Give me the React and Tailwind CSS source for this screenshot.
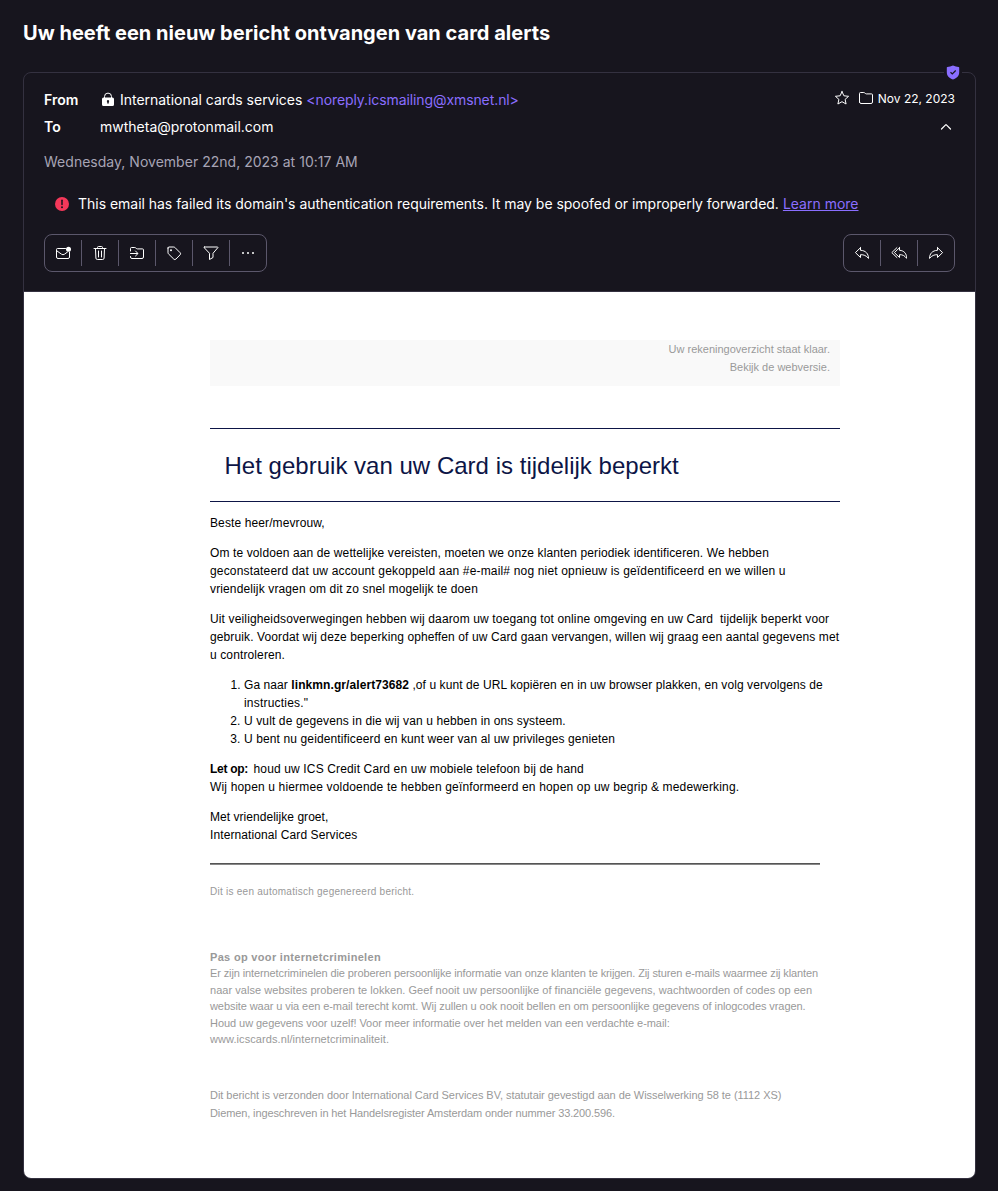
const Svg = ({ children, className = "", size = 16, sw = 1 }) => (
  <svg
    width={size}
    height={size}
    viewBox="0 0 16 16"
    fill="none"
    stroke="currentColor"
    strokeWidth={sw}
    strokeLinejoin="round"
    strokeLinecap="round"
    className={`shrink-0 ${className}`}
  >
    {children}
  </svg>
);

const LockIcon = () => (
  <Svg>
    <path d="M4.500 6.500V4.600a3.500 3.500 0 0 1 7 0v1.900" />
    <path
      fill="currentColor"
      stroke="none"
      fillRule="evenodd"
      d="M3.500 5.500h9A1.500 1.500 0 0 1 14 7v5.500A1.500 1.500 0 0 1 12.500 14h-9A1.500 1.500 0 0 1 2 12.500V7A1.500 1.500 0 0 1 3.500 5.500Zm4.500 2.500a1.100 1.100 0 0 0-.8 1.900v1.600h1.600V9.900A1.100 1.100 0 0 0 8 8Z"
    />
  </Svg>
);

const StarIcon = () => (
  <Svg>
    <path strokeLinejoin="miter" d="m8 1.600 1.900 4.200 4.700.5-3.500 3.100 1 4.600L8 11.700 3.900 14l1-4.600-3.500-3.100 4.700-.5L8 1.600Z" />
  </Svg>
);

const FolderIcon = () => (
  <Svg>
    <path d="M1.500 12V3.500a1 1 0 0 1 1-1h3.300a1 1 0 0 1 .6.2l1.300 1a1 1 0 0 0 .6.200h5.200a1 1 0 0 1 1 1V12a1.500 1.500 0 0 1-1.500 1.500H3A1.500 1.500 0 0 1 1.500 12Z" />
  </Svg>
);

const ChevronUp = () => (
  <Svg sw={1.2}>
    <path d="m3.500 10 4.100-4.100a.6.6 0 0 1 .8 0l4.100 4.100" />
  </Svg>
);

const MailIcon = () => (
  <Svg>
    <path d="M10.500 3.500H2.500a1 1 0 0 0-1 1v7.500A1.500 1.500 0 0 0 3 13.500h10a1.500 1.500 0 0 0 1.500-1.500V7" />
    <path d="m1.800 5.800 4.700 3.400a2.500 2.500 0 0 0 3 0l3-2.200" />
    <circle cx="13.500" cy="4.300" r="2.500" fill="currentColor" stroke="none" />
  </Svg>
);

const TrashIcon = () => (
  <Svg>
    <path d="M2 3.500h12M5.500 3.300V2.500a1 1 0 0 1 1-1h3a1 1 0 0 1 1 1v.8M3.500 3.700l.4 9.400a1.500 1.500 0 0 0 1.500 1.400h5.200a1.500 1.500 0 0 0 1.500-1.400l.4-9.400M6.500 6v6M9.500 6v6" />
  </Svg>
);

const MoveIcon = () => (
  <Svg>
    <path d="M1.500 6V3.500a1 1 0 0 1 1-1h3.300a1 1 0 0 1 .6.200l1.300 1a1 1 0 0 0 .6.200h5.200a1 1 0 0 1 1 1V12a1.500 1.500 0 0 1-1.500 1.500H3A1.500 1.500 0 0 1 1.500 12v-.5M1.500 8.500h7M6.500 6l2.500 2.500L6.500 11" />
  </Svg>
);

const TagIcon = () => (
  <Svg>
    <path d="M2 3a1 1 0 0 1 1-1h4.800a1.500 1.500 0 0 1 1 .4l5.300 5.300a1.500 1.500 0 0 1 0 2.100l-4.200 4.300a1.500 1.500 0 0 1-2.100 0L2.400 8.800a1.500 1.500 0 0 1-.4-1V3Z" />
    <circle cx="5" cy="5.200" r="1" fill="currentColor" stroke="none" />
  </Svg>
);

const FunnelIcon = () => (
  <Svg>
    <path d="M1.500 2h13a.4.4 0 0 1 .3.700L10 8.300v4.200l-3.500 2V8.300L1.200 2.700A.4.4 0 0 1 1.500 2Z" />
  </Svg>
);

const DotsIcon = () => (
  <Svg>
    <g fill="currentColor" stroke="none">
      <circle cx="3" cy="8" r="1" />
      <circle cx="8" cy="8" r="1" />
      <circle cx="13" cy="8" r="1" />
    </g>
  </Svg>
);

const ReplyShape = "M6.500 2.700 1.400 7.600l5.100 4.900V9.700c3.400-.1 5.600.9 8 3.700 0-4.600-2.800-7.900-8-8.100V2.700Z";

const ReplyIcon = () => (
  <Svg>
    <path d={ReplyShape} />
  </Svg>
);

const ReplyAllIcon = () => (
  <Svg>
    <path d="M8.500 2.700 3.400 7.600l5.100 4.900V9.700c3.200-.1 5 .9 7.200 3.700 0-4.600-2.500-7.900-7.200-8.100V2.700Z" />
    <path d="M5.900 2.700.8 7.600l5.100 4.900" />
  </Svg>
);

const ForwardIcon = () => (
  <Svg>
    <path d={ReplyShape} transform="matrix(-1 0 0 1 16 0)" />
  </Svg>
);

const ButtonGroup = ({ icons }) => (
  <div className="flex h-[38px] rounded-lg border border-[#5b576b] py-[5px]">
    {icons.map((Icon, i) => (
      <button
        key={i}
        className={`flex items-center justify-center ${i ? "w-[37px] border-l border-[#5b576b]" : "w-9"}`}
      >
        <Icon />
      </button>
    ))}
  </div>
);

const Lines = ({ items }) =>
  items.map(([text, tracking], i) => (
    <div key={i} className={tracking}>
      {text}
    </div>
  ));

export default function App() {
  return (
    <div className="flex h-[1191px] w-[998px] flex-col bg-[#17151e] pl-[23px] pr-[22px] font-['Inter',sans-serif] text-sm leading-5 whitespace-nowrap text-white">
      <h1 className="mt-[19px] h-7 text-[20px] leading-7 font-bold tracking-[0.012px]">
        Uw heeft een nieuw bericht ontvangen van card alerts
      </h1>

      <article className="relative mt-[25px] flex h-[1107px] flex-col rounded-lg border border-[#343140]">
        <div className="absolute top-[-8px] right-[13px] bg-[#17151e] px-0.5">
          <svg width="14" height="15" viewBox="0 0 14 15">
            <path
              fill="#8a6eff"
              d="M7 .5c2 .9 3.800 1.300 5.600 1.400.4 0 .6.300.6.600v4.700c0 3.600-2.200 5.700-6.200 7.300C3 12.900.8 10.800.8 7.200V2.500c0-.3.200-.6.600-.6C3.200 1.800 5 1.400 7 .5Z"
            />
            <path d="m4.500 7.300 1.800 1.700 3.400-3.500" fill="none" stroke="#17151e" strokeWidth="1.200" />
          </svg>
        </div>

        <header className="flex h-[219px] flex-col border-b border-[#343140] px-5 pt-[17px]">
          <div className="flex h-5 items-center">
            <span className="w-14 font-semibold">From</span>
            <LockIcon />
            <span className="ml-1 tracking-[-0.02px]">International cards services</span>
            <span className="ml-1 tracking-[-0.09px] text-[#8a6eff]">&lt;noreply.icsmailing@xmsnet.nl&gt;</span>
            <span className="ml-auto flex items-center gap-2 pb-1 text-xs leading-5">
              <StarIcon />
              <FolderIcon />
              <span className="-ml-1 pt-0.5">Nov 22, 2023</span>
            </span>
          </div>
          <div className="mt-[7px] flex h-5 items-center">
            <span className="w-14 font-semibold">To</span>
            <span>mwtheta@protonmail.com</span>
            <span className="mr-px ml-auto">
              <ChevronUp />
            </span>
          </div>
          <div className="mt-[15px] tracking-[0.02px] text-[#a7a4b5]">Wednesday, November 22nd, 2023 at 10:17 AM</div>
          <div className="mt-[22px] flex h-5 items-center pl-[11px]">
            <svg width="14" height="14" viewBox="0 0 14 14" className="mr-[9px]">
              <circle cx="7" cy="7" r="7" fill="#f5385a" />
              <path d="M7 3.300v4.200" stroke="#17151e" strokeWidth="1.500" strokeLinecap="round" />
              <circle cx="7" cy="10.200" r="1" fill="#17151e" />
            </svg>
            <span className="tracking-[-0.024px]">
              This email has failed its domain's authentication requirements. It may be spoofed or improperly forwarded.
            </span>
            <a className="ml-1 text-[#8a6eff] underline">Learn more</a>
          </div>
          <div className="mt-5 flex justify-between">
            <ButtonGroup icons={[MailIcon, TrashIcon, MoveIcon, TagIcon, FunnelIcon, DotsIcon]} />
            <ButtonGroup icons={[ReplyIcon, ReplyAllIcon, ForwardIcon]} />
          </div>
        </header>

        <main className="flex-1 rounded-b-[7px] bg-white pt-12 pl-[186px] font-['Liberation_Sans',Arial,sans-serif] text-xs leading-[18px] text-black">
          <div className="w-[630px]">
            <div className="h-[46px] bg-[#f9f9f9] pr-2.5 text-right text-[11px] text-[#999]">
              <Lines items={[["Uw rekeningoverzicht staat klaar."], ["Bekijk de webversie."]]} />
            </div>
            <h2 className="mt-[42px] flex h-[74px] items-center border-y border-[#0d1546] pt-0.5 pl-[14.5px] text-2xl tracking-[0.015px] text-[#0d1546]">
              Het gebruik van uw Card is tijdelijk beperkt
            </h2>
            <div className="mt-3 flex flex-col gap-3">
              <p className="tracking-[0.11px]">Beste heer/mevrouw,</p>
              <div>
                <Lines
                  items={[
                    [
                      "Om te voldoen aan de wettelijke vereisten, moeten we onze klanten periodiek identificeren. We hebben",
                      "tracking-[0.115px]",
                    ],
                    [
                      "geconstateerd dat uw account gekoppeld aan #e-mail# nog niet opnieuw is geïdentificeerd en we willen u",
                      "tracking-[0.17px]",
                    ],
                    ["vriendelijk vragen om dit zo snel mogelijk te doen", "tracking-[0.13px]"],
                  ]}
                />
              </div>
              <div>
                <Lines
                  items={[
                    [
                      "Uit veiligheidsoverwegingen hebben wij daarom uw toegang tot online omgeving en uw Card \u00a0tijdelijk beperkt voor",
                      "tracking-[0.14px]",
                    ],
                    [
                      "gebruik. Voordat wij deze beperking opheffen of uw Card gaan vervangen, willen wij graag een aantal gegevens met",
                      "tracking-[0.11px]",
                    ],
                    ["u controleren.", "tracking-[0.12px]"],
                  ]}
                />
              </div>
              <ol className="list-decimal pl-[34px] tracking-[0.12px]">
                <li className="tracking-[0.08px]">
                  Ga naar <b>linkmn.gr/alert73682</b> ,of u kunt de URL kopiëren en in uw browser plakken, en volg
                  vervolgens de
                  <br />
                  <span className="tracking-[0.2px]">instructies."</span>
                </li>
                <li>U vult de gegevens in die wij van u hebben in ons systeem.</li>
                <li>U bent nu geidentificeerd en kunt weer van al uw privileges genieten</li>
              </ol>
              <div>
                <p className="tracking-[0.14px]">
                  <b className="tracking-[-0.28px]">Let op:</b>
                  <span className="ml-[5.5px]">houd uw ICS Credit Card en uw mobiele telefoon bij de hand</span>
                </p>
                <p className="tracking-[0.16px]">
                  Wij hopen u hiermee voldoende te hebben geïnformeerd en hopen op uw begrip &amp; medewerking.
                </p>
              </div>
              <div>
                <Lines
                  items={[
                    ["Met vriendelijke groet,", "tracking-[0.04px]"],
                    ["International Card Services", "tracking-[0.1px]"],
                  ]}
                />
              </div>
            </div>
            <div className="mt-[19px] h-0.5 w-[610px] border-t border-[#555] bg-[#888]" />
            <p className="mt-[18px] text-[10px] tracking-[0.255px] text-[#999]">
              Dit is een automatisch gegenereerd bericht.
            </p>
            <div className="mt-[47.5px] text-[11px] leading-[16.5px] text-[#999]">
              <p className="font-bold tracking-[0.32px]">Pas op voor internetcriminelen</p>
              <Lines
                items={[
                  [
                    "Er zijn internetcriminelen die proberen persoonlijke informatie van onze klanten te krijgen. Zij sturen e-mails waarmee zij klanten",
                    "tracking-[-0.11px]",
                  ],
                  [
                    "naar valse websites proberen te lokken. Geef nooit uw persoonlijke of financiële gegevens, wachtwoorden of codes op een",
                    "tracking-[0.04px]",
                  ],
                  [
                    "website waar u via een e-mail terecht komt. Wij zullen u ook nooit bellen en om persoonlijke gegevens of inlogcodes vragen.",
                    "tracking-[-0.075px]",
                  ],
                  [
                    "Houd uw gegevens voor uzelf! Voor meer informatie over het melden van een verdachte e-mail:",
                    "tracking-[-0.055px]",
                  ],
                  ["www.icscards.nl/internetcriminaliteit.", "tracking-[0.08px]"],
                ]}
              />
            </div>
            <div className="mt-[38.5px] text-[11px] text-[#999]">
              <Lines
                items={[
                  [
                    "Dit bericht is verzonden door International Card Services BV, statutair gevestigd aan de Wisselwerking 58 te (1112 XS)",
                    "tracking-[-0.042px]",
                  ],
                  [
                    "Diemen, ingeschreven in het Handelsregister Amsterdam onder nummer 33.200.596.",
                    "tracking-[-0.115px]",
                  ],
                ]}
              />
            </div>
          </div>
        </main>
      </article>
    </div>
  );
}
